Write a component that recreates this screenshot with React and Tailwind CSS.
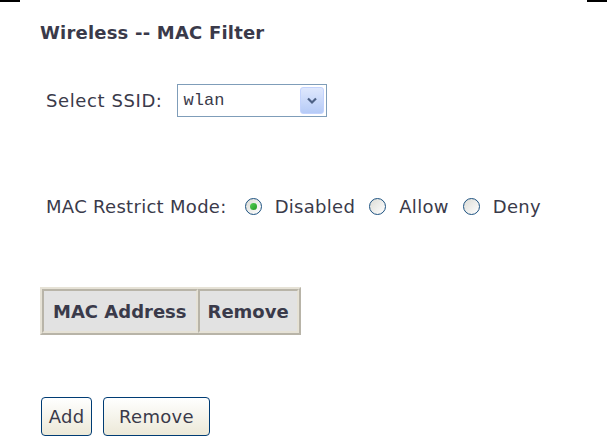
const Radio = ({ checked }) => (
  <span className="inline-flex items-center justify-center w-[17px] h-[17px] rounded-full border border-[#1c5180] bg-gradient-to-br from-[#dcdcd6] to-white">
    {checked && <span className="w-[7px] h-[7px] rounded-full bg-gradient-to-br from-[#55d155] to-[#219821]" />}
  </span>
);

const XpButton = ({ children, className = "" }) => (
  <button
    className={`h-[39px] rounded-[4px] border border-[#003c74] bg-gradient-to-b from-white to-[#ece9d8] text-[#3a3a4a] text-[18px] tracking-[0.3px] ${className}`}
  >
    {children}
  </button>
);

export default function App() {
  return (
    <div
      className="w-[607px] h-[445px] bg-white text-[#3a3a4a] overflow-hidden"
      style={{ fontFamily: '"DejaVu Sans", sans-serif' }}
    >
      <div className="flex justify-between">
        <div className="w-[20px] h-[2px] bg-black" />
        <div className="w-[20px] h-[2px] bg-black" />
      </div>

      <div className="pl-[40px]">
        <h1 className="mt-[20px] text-[18px] font-bold leading-[22px] tracking-[0.2px]">Wireless -- MAC Filter</h1>

        <div className="mt-[40px] flex items-center pl-[6px] text-[18px] tracking-[0.6px]">
          <span>Select SSID:</span>
          <div className="ml-[14px] w-[150px] h-[33px] border border-[#7f9db9] bg-white flex items-center justify-between pl-[6px] pr-[2px]">
            <span className="text-[17px] tracking-normal" style={{ fontFamily: '"Liberation Mono", monospace' }}>wlan</span>
            <span className="w-[24px] h-[27px] rounded-[3px] bg-gradient-to-b from-[#dfe8fd] to-[#b6cbf7] border border-[#c3d3fd] flex items-center justify-center">
              <svg width="10" height="8" viewBox="0 0 10 8">
                <path d="M1 1.5 L5 5.5 L9 1.5" fill="none" stroke="#4d6185" strokeWidth="2.2" />
              </svg>
            </span>
          </div>
        </div>

        <div className="mt-[76px] flex items-center pl-[6px] text-[18px] tracking-[0.3px]">
          <span>MAC Restrict Mode:</span>
          <span className="ml-[18px] flex"><Radio checked /></span>
          <span className="ml-[13px]">Disabled</span>
          <span className="ml-[14px] flex"><Radio /></span>
          <span className="ml-[13px]">Allow</span>
          <span className="ml-[14px] flex"><Radio /></span>
          <span className="ml-[13px]">Deny</span>
        </div>

        <table className="mt-[67px] border-separate border-spacing-0 border-2 border-t-[#e6e2d6] border-l-[#e6e2d6] border-b-[#b8b4a8] border-r-[#b8b4a8]">
          <tbody>
            <tr>
              <td className="h-[44px] px-[9px] text-[18px] font-bold bg-[#e2e2e2] border-2 border-t-[#b8b4a8] border-l-[#b8b4a8] border-b-[#e6e2d6] border-r-[#e6e2d6]">MAC Address</td>
              <td className="h-[44px] px-[8px] text-[18px] font-bold bg-[#e2e2e2] border-2 border-t-[#b8b4a8] border-l-[#b8b4a8] border-b-[#e6e2d6] border-r-[#e6e2d6]">Remove</td>
            </tr>
          </tbody>
        </table>

        <div className="mt-[62px] flex gap-[11px] pl-[1px]">
          <XpButton className="w-[51px]">Add</XpButton>
          <XpButton className="w-[107px]">Remove</XpButton>
        </div>
      </div>
    </div>
  );
}
